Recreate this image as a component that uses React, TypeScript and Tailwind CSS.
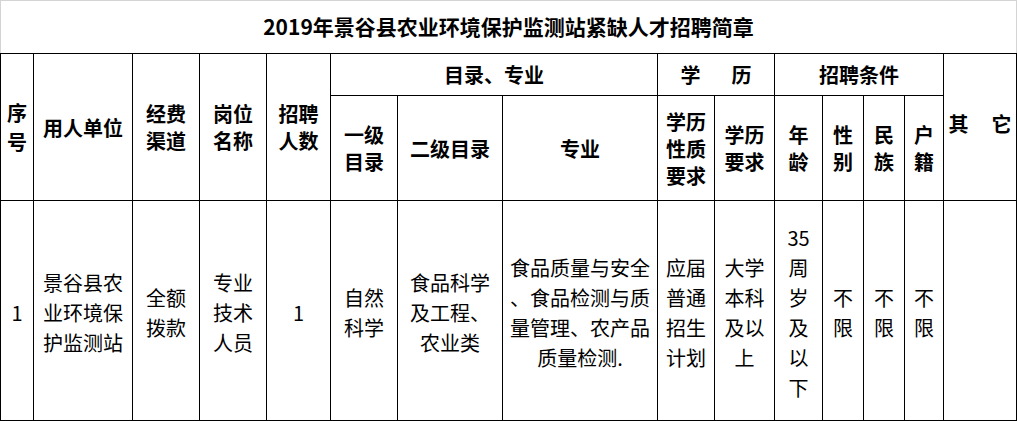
import React from 'react';

const font = { fontFamily: '"Noto Sans CJK SC", "Noto Sans", sans-serif' };

interface CellProps {
  lines: React.ReactNode[];
  className?: string;
  bold?: boolean;
}

const Cell: React.FC<CellProps> = ({ lines, className = '', bold = false }) => (
  <div
    className={`bg-white flex flex-col items-center justify-center text-center text-black ${
      bold ? 'font-bold text-[20px] leading-[27px]' : 'font-normal text-[20px] leading-[30px]'
    } ${className}`}
  >
    {lines.map((l, i) => (
      <span key={i} className="whitespace-nowrap">
        {l}
      </span>
    ))}
  </div>
);

const App: React.FC = () => {
  return (
    <div className="w-[1017px] h-[421px] bg-white overflow-hidden" style={font}>
      <div className="h-[53px] border border-b-0 border-[#d4d4d4] flex items-center justify-center">
        <h1 className="text-[21px] font-bold text-black leading-none -mt-[2px]">
          2019年景谷县农业环境保护监测站紧缺人才招聘简章
        </h1>
      </div>

      <div className="grid bg-black gap-px p-px grid-cols-[32px_98px_66px_66px_63px_66px_104px_154px_56px_59px_47px_40px_40px_38px_72px] grid-rows-[41px_104px_219px]">
        {/* header, left block */}
        <Cell bold className="row-span-2 leading-[29px]" lines={['序', '号']} />
        <Cell bold className="row-span-2" lines={['用人单位']} />
        <Cell bold className="row-span-2" lines={['经费', '渠道']} />
        <Cell bold className="row-span-2" lines={['岗位', '名称']} />
        <Cell bold className="row-span-2" lines={['招聘', '人数']} />

        {/* header, first row */}
        <Cell bold className="col-span-3" lines={['目录、专业']} />
        <Cell
          bold
          className="col-span-2"
          lines={[
            <span className="inline-flex gap-[31px]">
              <span>学</span>
              <span>历</span>
            </span>,
          ]}
        />
        <Cell bold className="col-span-4" lines={['招聘条件']} />
        <Cell
          bold
          className="row-span-2 pb-[8px]"
          lines={[
            <span className="inline-flex gap-[23px]">
              <span>其</span>
              <span>它</span>
            </span>,
          ]}
        />

        {/* header, second row */}
        <Cell bold lines={['一级', '目录']} />
        <Cell bold lines={['二级目录']} />
        <Cell bold lines={['专业']} />
        <Cell bold lines={['学历', '性质', '要求']} />
        <Cell bold lines={['学历', '要求']} />
        <Cell bold lines={['年', '龄']} />
        <Cell bold lines={['性', '别']} />
        <Cell bold lines={['民', '族']} />
        <Cell bold lines={['户', '籍']} />

        {/* body */}
        <Cell className="pt-[4px]" lines={['1']} />
        <Cell className="pt-[4px]" lines={['景谷县农', '业环境保', '护监测站']} />
        <Cell className="pt-[4px]" lines={['全额', '拨款']} />
        <Cell className="pt-[4px]" lines={['专业', '技术', '人员']} />
        <Cell className="pt-[4px]" lines={['1']} />
        <Cell className="pt-[4px]" lines={['自然', '科学']} />
        <Cell className="pt-[4px]" lines={['食品科学', '及工程、', '农业类']} />
        <Cell
          className="pt-[4px]"
          lines={['食品质量与安全', '、食品检测与质', '量管理、农产品', '质量检测.']}
        />
        <Cell className="pt-[4px]" lines={['应届', '普通', '招生', '计划']} />
        <Cell className="pt-[4px]" lines={['大学', '本科', '及以', '上']} />
        <Cell className="pt-[4px]" lines={['35', '周', '岁', '及', '以', '下']} />
        <Cell className="pt-[4px]" lines={['不', '限']} />
        <Cell className="pt-[4px]" lines={['不', '限']} />
        <Cell className="pt-[4px]" lines={['不', '限']} />
        <Cell lines={['']} />
      </div>
    </div>
  );
};

export default App;
